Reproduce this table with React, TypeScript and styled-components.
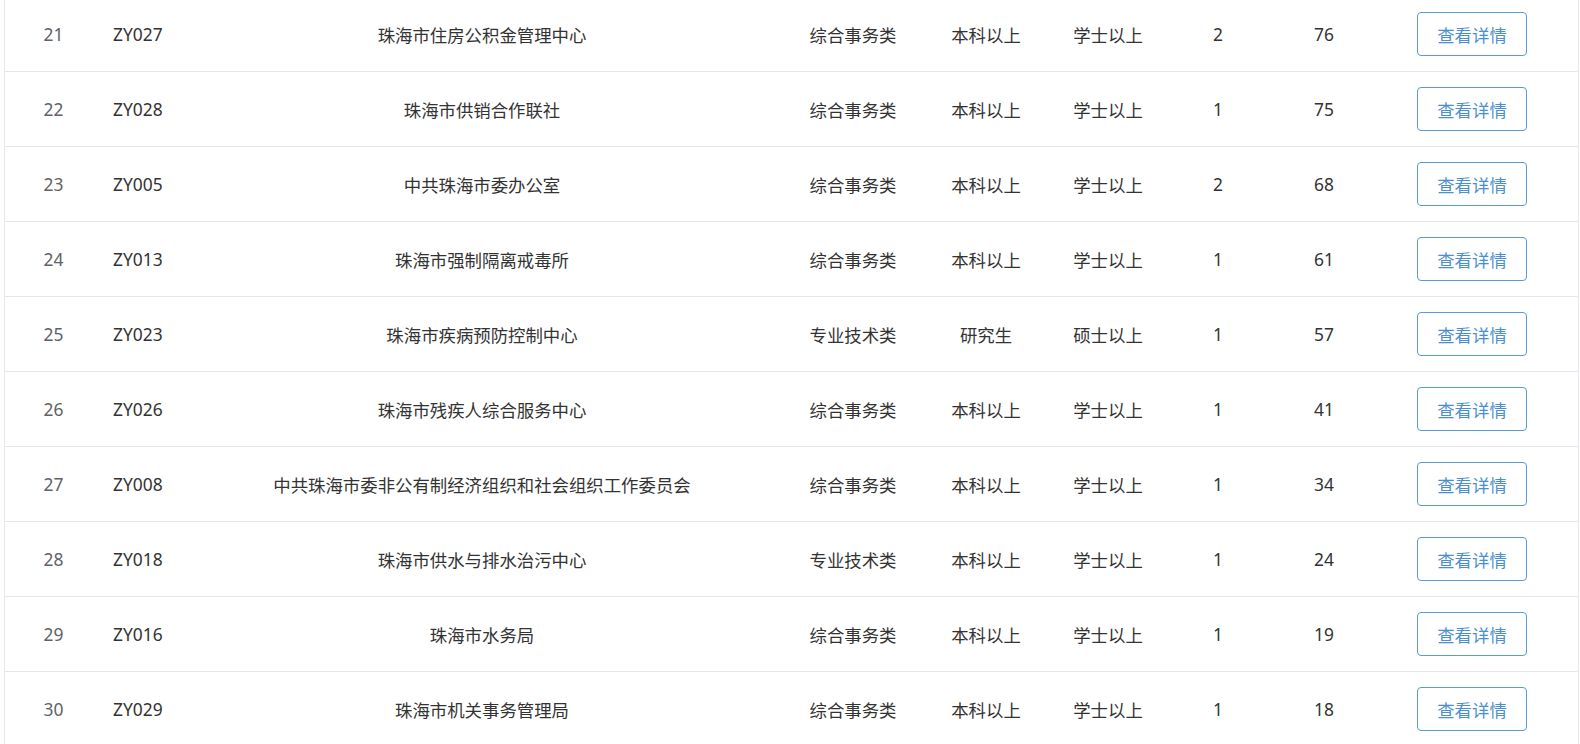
import styled, { createGlobalStyle } from 'styled-components'

type Post = {
  no: number
  code: string
  unit: string
  kind: string
  edu: string
  degree: string
  count: number
  applicants: number
}

const posts: Post[] = [
  { no: 21, code: 'ZY027', unit: '珠海市住房公积金管理中心', kind: '综合事务类', edu: '本科以上', degree: '学士以上', count: 2, applicants: 76 },
  { no: 22, code: 'ZY028', unit: '珠海市供销合作联社', kind: '综合事务类', edu: '本科以上', degree: '学士以上', count: 1, applicants: 75 },
  { no: 23, code: 'ZY005', unit: '中共珠海市委办公室', kind: '综合事务类', edu: '本科以上', degree: '学士以上', count: 2, applicants: 68 },
  { no: 24, code: 'ZY013', unit: '珠海市强制隔离戒毒所', kind: '综合事务类', edu: '本科以上', degree: '学士以上', count: 1, applicants: 61 },
  { no: 25, code: 'ZY023', unit: '珠海市疾病预防控制中心', kind: '专业技术类', edu: '研究生', degree: '硕士以上', count: 1, applicants: 57 },
  { no: 26, code: 'ZY026', unit: '珠海市残疾人综合服务中心', kind: '综合事务类', edu: '本科以上', degree: '学士以上', count: 1, applicants: 41 },
  { no: 27, code: 'ZY008', unit: '中共珠海市委非公有制经济组织和社会组织工作委员会', kind: '综合事务类', edu: '本科以上', degree: '学士以上', count: 1, applicants: 34 },
  { no: 28, code: 'ZY018', unit: '珠海市供水与排水治污中心', kind: '专业技术类', edu: '本科以上', degree: '学士以上', count: 1, applicants: 24 },
  { no: 29, code: 'ZY016', unit: '珠海市水务局', kind: '综合事务类', edu: '本科以上', degree: '学士以上', count: 1, applicants: 19 },
  { no: 30, code: 'ZY029', unit: '珠海市机关事务管理局', kind: '综合事务类', edu: '本科以上', degree: '学士以上', count: 1, applicants: 18 },
]

export default function App() {
  return (
    <>
      <GlobalStyle />
      <Table>
        {posts.map(p => (
          <Row key={p.no}>
            <Cell muted>{p.no}</Cell>
            <Cell align="left">{p.code}</Cell>
            <Cell>{p.unit}</Cell>
            <Cell>{p.kind}</Cell>
            <Cell>{p.edu}</Cell>
            <Cell>{p.degree}</Cell>
            <Cell>{p.count}</Cell>
            <Cell>{p.applicants}</Cell>
            <Cell>
              <DetailButton type="button">查看详情</DetailButton>
            </Cell>
          </Row>
        ))}
      </Table>
    </>
  )
}

const GlobalStyle = createGlobalStyle`
  html, body {
    margin: 0;
    padding: 0;
    background: #fff;
    overflow: hidden;
  }
  body {
    font-family: "Noto Sans", "Noto Sans CJK SC", sans-serif;
    font-size: 17.4px;
    color: #333;
  }
`

const Table = styled.div`
  margin: -3px 0 0 4px;
  width: 1575px;
  box-sizing: border-box;
  border-left: 1px solid #e4e7ed;
  border-right: 1px solid #e4e7ed;
`

const Row = styled.div`
  display: grid;
  grid-template-columns: 97px 93px 574px 168px 98px 146px 74px 138px 158px;
  height: 74px;
  border-bottom: 1px solid #e6e6e6;
`

const Cell = styled.div<{ align?: 'left'; muted?: boolean }>`
  display: flex;
  align-items: center;
  justify-content: ${p => (p.align === 'left' ? 'flex-start' : 'center')};
  padding-left: ${p => (p.align === 'left' ? '11px' : '0')};
  color: ${p => (p.muted ? '#606266' : '#333')};
  white-space: nowrap;
`

const DetailButton = styled.button`
  width: 110px;
  height: 44px;
  box-sizing: border-box;
  border: 1px solid #5a9bd5;
  border-radius: 4px;
  background: #fff;
  color: #4a8fd0;
  font-family: "Noto Sans", "Noto Sans CJK SC", sans-serif;
  font-size: 17.4px;
  cursor: pointer;
  padding: 0;
`
